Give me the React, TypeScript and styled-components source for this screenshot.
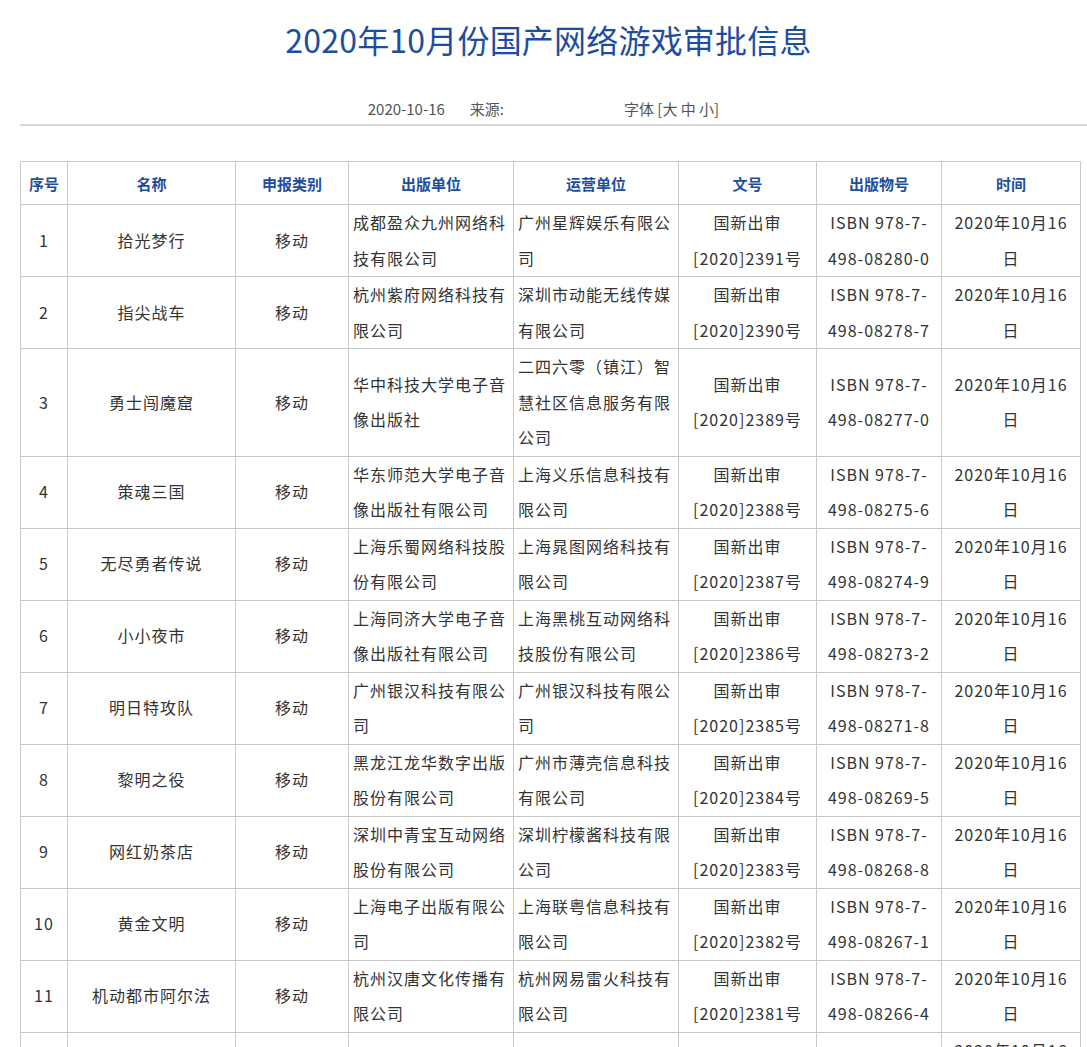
import React from "react";
import styled, { createGlobalStyle } from "styled-components";

const Global = createGlobalStyle`
  body { margin: 0; background: #fff; font-family: "Noto Sans CJK SC", "Noto Sans", sans-serif; color: #333; }
`;

const Page = styled.div`
  padding: 0 0 0 20px;
  width: 1067px;
  overflow: hidden;
`;
const Title = styled.h1`
  margin: 0;
  padding-top: 14px;
  height: 50px;
  line-height: 50px;
  text-align: center;
  font-size: 32px;
  font-weight: 400;
  color: #1d4e9e;
  padding-right: 10px;
  letter-spacing: 0.2px;
`;
const Meta = styled.div`
  margin-top: 30px;
  height: 30px;
  line-height: 30px;
  display: flex;
  justify-content: center;
  gap: 25px;
  font-size: 15px;
  color: #555;
  padding-right: 20px;
  border-bottom: 2px solid #d8d8d8;
  span.gap { width: 70px; }
`;
const Table = styled.table`
  margin-top: 35px;
  border-collapse: collapse;
  width: 1060px;
  table-layout: fixed;
  font-size: 16px;
  color: #333;
`;
const Th = styled.th`
  border: 1px solid #c8c8c8;
  color: #1d4e9e;
  font-weight: 700;
  height: 40px;
  font-size: 15px;
`;
const Td = styled.td<{ $left?: boolean }>`
  border: 1px solid #c8c8c8;
  text-align: ${(p) => (p.$left ? "left" : "center")};
  line-height: 35.5px;
  padding: 0 4px;
  word-break: break-all;
  letter-spacing: 1px;
`;

const widths = [47, 168, 113, 165, 165, 138, 125, 139];
const heads = ["序号", "名称", "申报类别", "出版单位", "运营单位", "文号", "出版物号", "时间"];
const rows: string[][] = [
  ["拾光梦行", "成都盈众九州网络科技有限公司", "广州星辉娱乐有限公司", "2391", "08280-0"],
  ["指尖战车", "杭州紫府网络科技有限公司", "深圳市动能无线传媒有限公司", "2390", "08278-7"],
  ["勇士闯魔窟", "华中科技大学电子音像出版社", "二四六零（镇江）智慧社区信息服务有限公司", "2389", "08277-0"],
  ["策魂三国", "华东师范大学电子音像出版社有限公司", "上海义乐信息科技有限公司", "2388", "08275-6"],
  ["无尽勇者传说", "上海乐蜀网络科技股份有限公司", "上海晁图网络科技有限公司", "2387", "08274-9"],
  ["小小夜市", "上海同济大学电子音像出版社有限公司", "上海黑桃互动网络科技股份有限公司", "2386", "08273-2"],
  ["明日特攻队", "广州银汉科技有限公司", "广州银汉科技有限公司", "2385", "08271-8"],
  ["黎明之役", "黑龙江龙华数字出版股份有限公司", "广州市薄壳信息科技有限公司", "2384", "08269-5"],
  ["网红奶茶店", "深圳中青宝互动网络股份有限公司", "深圳柠檬酱科技有限公司", "2383", "08268-8"],
  ["黄金文明", "上海电子出版有限公司", "上海联粤信息科技有限公司", "2382", "08267-1"],
  ["机动都市阿尔法", "杭州汉唐文化传播有限公司", "杭州网易雷火科技有限公司", "2381", "08266-4"],
];

export default function App() {
  return (
    <>
      <Global />
      <Page>
        <Title>2020年10月份国产网络游戏审批信息</Title>
        <Meta>
          <span>2020-10-16</span>
          <span>来源:</span>
          <span className="gap" />
          <span>字体 [大 中 小]</span>
        </Meta>
        <Table>
          <colgroup>
            {widths.map((w, i) => <col key={i} style={{ width: w }} />)}
          </colgroup>
          <thead>
            <tr>{heads.map((h) => <Th key={h}>{h}</Th>)}</tr>
          </thead>
          <tbody>
            {rows.map((r, i) => (
              <tr key={i}>
                <Td>{i + 1}</Td>
                <Td>{r[0]}</Td>
                <Td>移动</Td>
                <Td $left>{r[1]}</Td>
                <Td $left>{r[2]}</Td>
                <Td>国新出审<br />[2020]{r[3]}号</Td>
                <Td>ISBN 978-7-<br />498-{r[4]}</Td>
                <Td>2020年10月16日</Td>
              </tr>
            ))}
            <tr>
              <Td>12</Td><Td>&nbsp;</Td><Td>移动</Td><Td /><Td /><Td>国新出审</Td><Td>ISBN 978-7-</Td><Td>2020年10月16日</Td>
            </tr>
          </tbody>
        </Table>
      </Page>
    </>
  );
}
